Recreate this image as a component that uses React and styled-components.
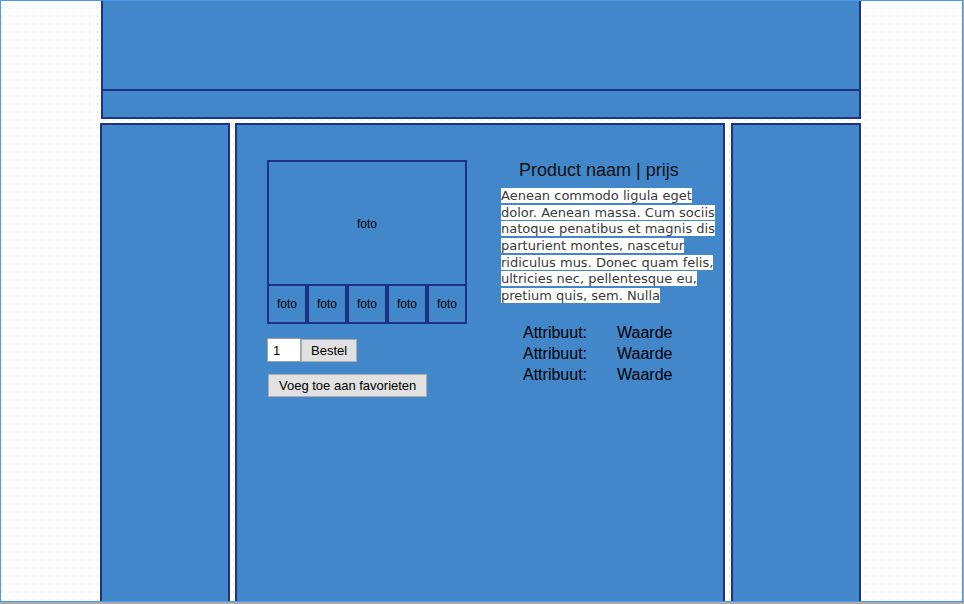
import React from 'react';
import styled, { createGlobalStyle } from 'styled-components';

const BLUE = '#4287ca';
const NAVY = '#1d3282';

const GlobalStyle = createGlobalStyle`
  html, body {
    margin: 0;
    padding: 0;
    background: #a9a9a9;
  }
  body {
    font-family: Arial, "Liberation Sans", sans-serif;
  }
`;

const Frame = styled.div`
  width: 963px;
  height: 602px;
  box-sizing: border-box;
  border: 1px solid #4a9bf0;
  overflow: hidden;
  padding-left: 99px;
  background-color: #fff;
  /* dotted grid of the canvas */
  background-image: linear-gradient(90deg, #fff 7px, transparent 7px),
    linear-gradient(#fff 6px, #e3e3e3 6px);
  background-size: 8px 8px;
  background-position: 1px 0;
`;

const Header = styled.header`
  width: 760px;
  margin-left: 1px;
  box-sizing: border-box;
  border: 2px solid ${NAVY};
  border-top: 0;
  background: ${BLUE};
`;

const Banner = styled.div`
  height: 88px;
  border-bottom: 2px solid ${NAVY};
`;

const NavBar = styled.nav`
  height: 26px;
`;

const Columns = styled.div`
  display: flex;
  margin-top: 4px;
`;

const Column = styled.div`
  width: ${(p) => p.$width}px;
  margin-left: ${(p) => p.$offset || 0}px;
  height: 520px;
  box-sizing: border-box;
  border: 2px solid ${NAVY};
  border-bottom: 0;
  background: ${BLUE};
`;

const Content = styled.div`
  display: flex;
  gap: 34px;
  padding: 35px 0 0 30px;
`;

const Gallery = styled.div`
  width: 200px;
`;

const MainPhoto = styled.div`
  height: 126px;
  box-sizing: border-box;
  padding-top: 2px;
  border: 2px solid ${NAVY};
  display: flex;
  align-items: center;
  justify-content: center;
  font-size: 12px;
  color: #000;
`;

const Thumbs = styled.div`
  display: flex;
`;

const Thumb = styled.div`
  width: 40px;
  height: 38px;
  box-sizing: border-box;
  border: 2px solid ${NAVY};
  border-top: 0;
  display: flex;
  align-items: center;
  justify-content: center;
  font-size: 12px;
  color: #000;
`;

const OrderRow = styled.div`
  display: flex;
  align-items: flex-start;
  margin-top: 14px;
`;

const QtyInput = styled.input`
  width: 34px;
  height: 24px;
  box-sizing: border-box;
  margin: 0;
  padding: 0 0 0 5px;
  border: 1px solid #a0a0a0;
  background: #fff;
  font-family: Arial, "Liberation Sans", sans-serif;
  font-size: 13px;
  color: #000;
  outline: none;
`;

const Button = styled.button`
  height: 23px;
  margin: ${(p) => (p.$block ? '12px 0 0 1px' : '1px 0 0')};
  padding: 0 ${(p) => (p.$block ? 10 : 9)}px;
  box-sizing: border-box;
  border: 1px solid #adadad;
  border-radius: 0;
  background: #e1e1e1;
  font-family: Arial, "Liberation Sans", sans-serif;
  font-size: 13px;
  color: #000;
  cursor: pointer;
`;

const Info = styled.div`
  width: 214px;
`;

const Title = styled.h1`
  margin: 0;
  padding-left: 18px;
  font-size: 18px;
  font-weight: normal;
  line-height: 21px;
  color: #111;
`;

const Description = styled.p`
  margin: 7px 0 0;
  font-family: "DejaVu Sans", Verdana, sans-serif;
  font-size: 13px;
  line-height: 16.67px;
  color: #3a3a3a;
  white-space: nowrap;

  span {
    background: #fff;
  }
`;

const Attributes = styled.dl`
  display: grid;
  grid-template-columns: 94px auto;
  margin: 17px 0 0;
  padding-left: 22px;
  font-size: 16px;
  line-height: 21px;
  color: #000;

  dt,
  dd {
    margin: 0;
  }
`;

const descLines = [
  'Aenean commodo ligula eget',
  'dolor. Aenean massa. Cum sociis',
  'natoque penatibus et magnis dis',
  'parturient montes, nascetur',
  'ridiculus mus. Donec quam felis,',
  'ultricies nec, pellentesque eu,',
  'pretium quis, sem. Nulla',
];

export default function App() {
  return (
    <>
      <GlobalStyle />
      <Frame>
        <Header>
          <Banner />
          <NavBar />
        </Header>
        <Columns>
          <Column $width={130} />
          <Column $width={490} $offset={5}>
            <Content>
              <div>
                <Gallery>
                  <MainPhoto>foto</MainPhoto>
                  <Thumbs>
                    {[0, 1, 2, 3, 4].map((i) => (
                      <Thumb key={i}>foto</Thumb>
                    ))}
                  </Thumbs>
                </Gallery>
                <OrderRow>
                  <QtyInput defaultValue="1" />
                  <Button>Bestel</Button>
                </OrderRow>
                <Button $block>Voeg toe aan favorieten</Button>
              </div>
              <Info>
                <Title>Product naam | prijs</Title>
                <Description>
                  {descLines.map((line, i) => (
                    <React.Fragment key={i}>
                      <span>{line}</span>
                      {i < descLines.length - 1 && <br />}
                    </React.Fragment>
                  ))}
                </Description>
                <Attributes>
                  {[0, 1, 2].map((i) => (
                    <React.Fragment key={i}>
                      <dt>Attribuut:</dt>
                      <dd>Waarde</dd>
                    </React.Fragment>
                  ))}
                </Attributes>
              </Info>
            </Content>
          </Column>
          <Column $width={130} $offset={6} />
        </Columns>
      </Frame>
    </>
  );
}
